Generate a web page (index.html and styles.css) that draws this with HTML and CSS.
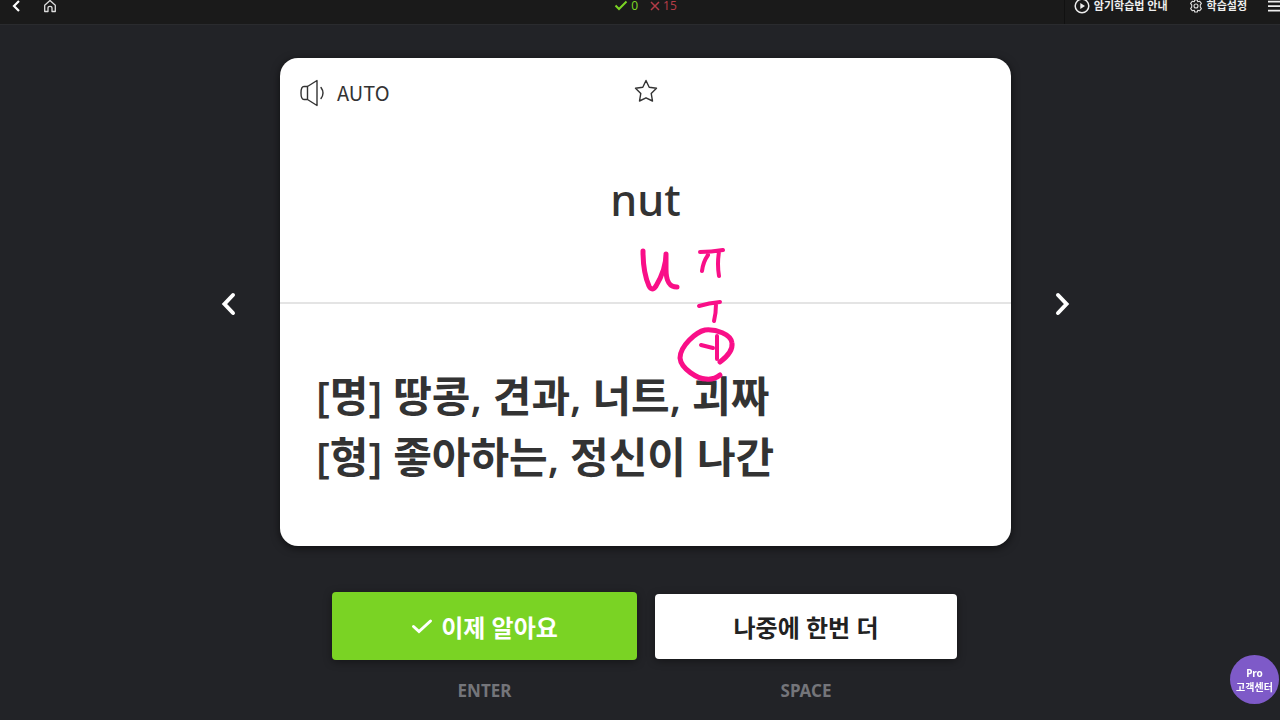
FILE: index.html
```html
<!DOCTYPE html>
<html lang="ko">
<head>
<meta charset="utf-8">
<meta name="viewport" content="width=device-width, initial-scale=1">
<title>nut</title>
<link rel="stylesheet" href="styles.css">
</head>
<body>
<header class="topbar">
  <nav class="topbar-side">
    <button class="icon-button back" aria-label="뒤로"><svg width="10" height="14" viewBox="0 0 10 14"><path d="M8 2L3 7l5 5" fill="none" stroke="#fff" stroke-width="2.2"/></svg></button>
    <a class="icon-button" href="#" aria-label="홈"><svg width="14" height="14" viewBox="0 0 14 14"><path d="M1.700 6.200L7 1.500l5.300 4.700V12.500H9V9Q9 7.300 7 7.300T5 9v3.500H1.700z" fill="none" stroke="#ddd" stroke-width="1.300" stroke-linejoin="round"/></svg></a>
  </nav>
  <div class="score">
    <span class="known"><svg width="14" height="12" viewBox="0 0 14 12"><path d="M1.500 5.500L5 9l7.500-7.500" fill="none" stroke="currentColor" stroke-width="2"/></svg>0</span>
    <span class="unknown"><svg width="10" height="10" viewBox="0 0 10 10"><path d="M1 1l8 8M9 1L1 9" fill="none" stroke="currentColor" stroke-width="1.500"/></svg>15</span>
  </div>
  <div class="topbar-side topbar-menu">
    <button class="menu-button"><svg width="16" height="16" viewBox="0 0 16 16"><circle cx="8" cy="8" r="6.800" fill="none" stroke="#eee" stroke-width="1.500"/><path d="M6.300 5v6L11 8z" fill="#eee"/></svg>암기학습법 안내</button>
    <button class="menu-button"><svg width="14" height="14" viewBox="0 0 14 14"><path d="M5.700 1h2.600l.5 1.800 1.800-.6 1.800 2.200-1.100 1.500v2.200l1.100 1.500-1.800 2.200-1.800-.6-.5 1.800H5.700l-.5-1.800-1.800.6-1.800-2.200 1.100-1.500V5.900L1.600 4.400l1.800-2.200 1.800.6z" fill="none" stroke="#ddd" stroke-width="1.100" stroke-linejoin="round"/><circle cx="7" cy="7" r="2" fill="none" stroke="#ddd" stroke-width="1.100"/></svg>학습설정</button>
    <button class="icon-button" aria-label="메뉴"><svg width="16" height="12" viewBox="0 0 16 12"><path d="M0 1.700h16M0 6.200h16M0 10.700h16" stroke="#eee" stroke-width="1.700"/></svg></button>
  </div>
</header>

<main class="study">
  <div class="stage">
    <button class="arrow" aria-label="이전"><svg width="18" height="26" viewBox="0 0 18 26"><path d="M13 4L4.500 13l8.500 9" fill="none" stroke="#fff" stroke-width="4" stroke-linecap="round"/></svg></button>
    <article class="card">
      <section class="front">
        <div class="card-tools">
          <button class="auto"><svg width="26" height="28" viewBox="0 0 26 28"><path d="M7.500 7.500L17 1.500v25l-9.500-6zM7.500 7.500H4Q1 7.500 1 14t3 6.500h3.500M21 8.500q4 5.500 0 11" fill="none" stroke="#333" stroke-width="1.400" stroke-linejoin="round" stroke-linecap="round"/></svg>AUTO</button>
          <button class="star" aria-label="즐겨찾기"><svg width="24" height="24" viewBox="0 0 24 24"><path d="M12 1.500l3.200 6.700 7.300 1-5.300 5.200 1.300 7.600L12 18.800 5.500 22l1.300-7.600L1.500 9.200l7.300-1z" fill="none" stroke="#333" stroke-width="1.400" stroke-linejoin="round"/></svg></button>
          <span></span>
        </div>
        <h1 class="word">nut</h1>
      </section>
      <section class="back-side">
        <p class="meaning">[명] 땅콩, 견과, 너트, 괴짜<br>[형] 좋아하는, 정신이 나간</p>
      </section>
      <svg class="ink" width="110" height="150" viewBox="630 240 110 150" aria-hidden="true">
        <path d="M643 251C643 263 645 277 649 286Q652 292 656 286C662 276 666 264 666 254V269C666 281 669 287 677 287"/>
        <path class="fine" d="M700 252Q711 252 723 250M708 255Q703 262 702 271M719 252Q717 264 719 276"/>
        <path class="fine" d="M699 306Q709 303 720 302M716 304Q716 313 714 321"/>
        <path d="M720 362C728 356 733 350 732 343C731 334 716 329 705 330C696 332 680 346 680 358C681 369 698 379 706 379Q714 380 720 375"/>
        <path class="fine" d="M701 345L713 348M717 336V359"/>
      </svg>
    </article>
    <button class="arrow" aria-label="다음"><svg width="18" height="26" viewBox="0 0 18 26"><path d="M5 4l8.500 9L5 22" fill="none" stroke="#fff" stroke-width="4" stroke-linecap="round"/></svg></button>
  </div>
  <div class="answers">
    <div class="answer">
      <button class="answer-button know"><svg width="22" height="18" viewBox="0 0 22 18"><path d="M2.500 9.500L8 14.500 19.500 4" fill="none" stroke="#fff" stroke-width="3" stroke-linecap="round"/></svg>이제 알아요</button>
      <span class="key">ENTER</span>
    </div>
    <div class="answer">
      <button class="answer-button later">나중에 한번 더</button>
      <span class="key">SPACE</span>
    </div>
  </div>
</main>
<button class="support">Pro<br>고객센터</button>
</body>
</html>
```
FILE: styles.css
```css
* { box-sizing: border-box; }
body {
  margin: 0;
  min-height: 100vh;
  overflow-x: hidden;
  background: #222327;
  color: #333;
  font-family: "Noto Sans", "Noto Sans CJK KR", sans-serif;
}
button {
  margin: 0;
  padding: 0;
  border: 0;
  background: none;
  color: inherit;
  font: inherit;
  cursor: pointer;
}
svg { display: block; flex: none; }

.topbar {
  display: grid;
  grid-template-columns: 1fr auto 1fr;
  grid-template-rows: 12px;
  align-items: center;
  height: 25px;
  overflow: hidden;
  background: #1a1a1a;
  border-bottom: 1px solid #2a2b2e;
}
.topbar-side {
  display: flex;
  align-items: center;
  padding-left: 11px;
  gap: 22px;
}
.topbar-menu {
  justify-content: flex-end;
  justify-self: end;
  height: 36px;
  margin-right: -4px;
  padding-left: 9px;
  gap: 21px;
  border-left: 1px solid #111;
  color: #eee;
}
.menu-button {
  display: flex;
  align-items: center;
  gap: 4px;
  font-size: 11px;
  font-weight: 700;
  line-height: 12px;
  white-space: nowrap;
}
.score {
  display: flex;
  gap: 12px;
  padding-left: 11px;
  font-size: 12px;
  line-height: 12px;
}
.known, .unknown { display: flex; align-items: center; gap: 3px; }
.known { color: #7bd424; }
.unknown { color: #b43c46; }

.study {
  display: flex;
  flex-direction: column;
  align-items: center;
  padding: 33px 0 16px 11px;
}
.stage {
  display: flex;
  align-items: center;
  justify-content: center;
  gap: 42px;
  width: 100%;
}
.arrow { flex: none; padding-top: 3px; }
.card {
  position: relative;
  flex: 0 1 731px;
  border-radius: 18px;
  background: #fff;
  box-shadow: 0 2px 8px #0009;
}
.front { min-height: 246px; border-bottom: 2px solid #e4e4e4; padding: 20px; }
.card-tools {
  display: grid;
  grid-template-columns: 1fr auto 1fr;
  align-items: center;
}
.auto {
  display: flex;
  align-items: center;
  gap: 11px;
  font-family: "Noto Sans CJK KR", sans-serif;
  font-size: 20px;
  line-height: 30px;
}
.star { padding-bottom: 5px; }
.word {
  margin: 62px 0 0;
  font-size: 43px;
  font-weight: 500;
  line-height: 60px;
  text-align: center;
}
.back-side {
  display: flex;
  align-items: center;
  min-height: 242px;
  padding: 2px 36px 0;
}
.meaning {
  margin: 0;
  font-family: "Open Sans", "Noto Sans CJK KR", sans-serif;
  font-size: 42px;
  font-weight: 600;
  line-height: 61px;
}
.ink {
  position: absolute;
  left: 350px;
  top: 182px;
  fill: none;
  stroke: #f90f88;
  stroke-width: 5;
  stroke-linecap: round;
  stroke-linejoin: round;
  pointer-events: none;
}
.fine { stroke-width: 4; }

.answers {
  display: flex;
  gap: 18px;
  padding: 46px 2px 0 0;
}
.answer {
  display: flex;
  flex-direction: column;
  align-items: center;
  gap: 19px;
}
.answer-button {
  display: flex;
  align-items: center;
  justify-content: center;
  gap: 8px;
  width: 305px;
  height: 68px;
  border-radius: 4px;
  font-size: 24px;
  box-shadow: 0 2px 8px #0006;
}
.know { background: #7ad324; color: #fff; font-weight: 700; }
.later {
  width: 302px;
  height: 65px;
  margin: 2px 0 1px;
  background: #fff;
  color: #222;
  font-weight: 600;
}
.key {
  color: #74757a;
  font-size: 17px;
  font-weight: 700;
  line-height: 24px;
}
.support {
  position: fixed;
  right: 1px;
  bottom: 16px;
  width: 49px;
  height: 49px;
  border-radius: 50%;
  background: #7e5ac8;
  color: #fff;
  font-size: 10px;
  font-weight: 700;
  line-height: 14px;
  white-space: nowrap;
}
```
